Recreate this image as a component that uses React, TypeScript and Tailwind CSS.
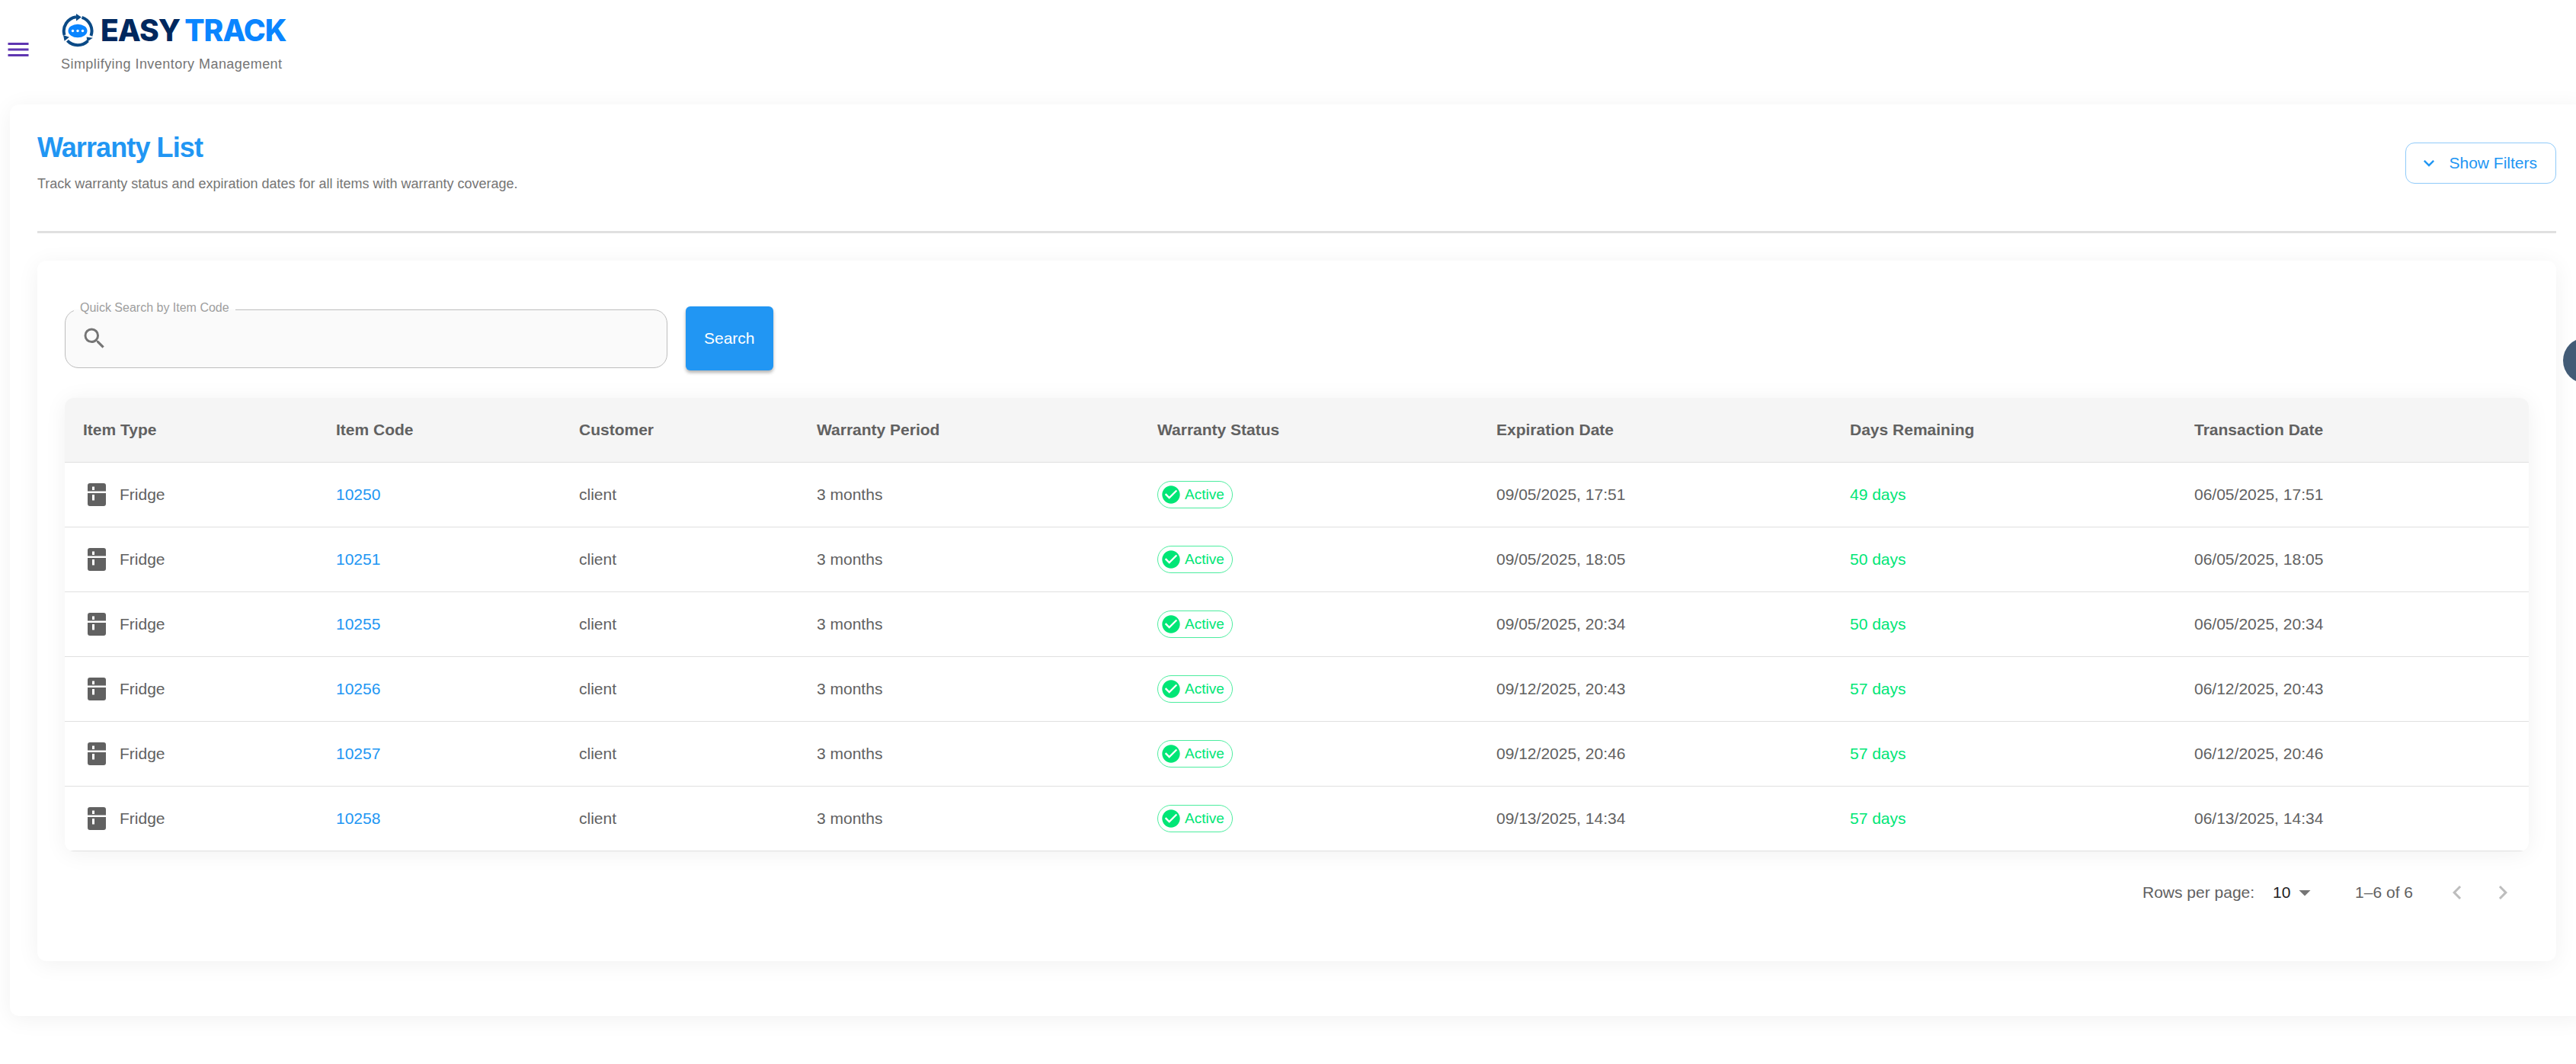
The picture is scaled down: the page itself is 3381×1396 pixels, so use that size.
import { useState } from "react";
import { MdArrowDropDown, MdCheckCircle, MdChevronLeft, MdChevronRight, MdExpandMore, MdMenu, MdSearch } from "react-icons/md";

type Warranty = {
  type: string;
  code: string;
  customer: string;
  period: string;
  status: string;
  expires: string;
  remaining: string;
  created: string;
};

const warranties: Warranty[] = [
  { type: "Fridge", code: "10250", customer: "client", period: "3 months", status: "Active", expires: "09/05/2025, 17:51", remaining: "49 days", created: "06/05/2025, 17:51" },
  { type: "Fridge", code: "10251", customer: "client", period: "3 months", status: "Active", expires: "09/05/2025, 18:05", remaining: "50 days", created: "06/05/2025, 18:05" },
  { type: "Fridge", code: "10255", customer: "client", period: "3 months", status: "Active", expires: "09/05/2025, 20:34", remaining: "50 days", created: "06/05/2025, 20:34" },
  { type: "Fridge", code: "10256", customer: "client", period: "3 months", status: "Active", expires: "09/12/2025, 20:43", remaining: "57 days", created: "06/12/2025, 20:43" },
  { type: "Fridge", code: "10257", customer: "client", period: "3 months", status: "Active", expires: "09/12/2025, 20:46", remaining: "57 days", created: "06/12/2025, 20:46" },
  { type: "Fridge", code: "10258", customer: "client", period: "3 months", status: "Active", expires: "09/13/2025, 14:34", remaining: "57 days", created: "06/13/2025, 14:34" }
];

const columns = [
  { label: "Item Type", width: "w-[332px]" },
  { label: "Item Code", width: "w-[319px]" },
  { label: "Customer", width: "w-[312px]" },
  { label: "Warranty Period", width: "w-[447px]" },
  { label: "Warranty Status", width: "w-[445px]" },
  { label: "Expiration Date", width: "w-[464px]" },
  { label: "Days Remaining", width: "w-[452px]" },
  { label: "Transaction Date", width: "w-[463px]" }
];

function LogoMark() {
  return (
    <svg viewBox="0 0 44 44" className="size-11" aria-hidden>
      <g fill="none" stroke="#0B4A86" strokeWidth="4">
        <path d="M4.5 28A18.8 18.8 0 0 1 20 4.2" />
        <path d="M27.5 4.8A18.8 18.8 0 0 1 39.4 29" />
        <path d="M35.4 35.6A18.8 18.8 0 0 1 8.4 35.4" />
      </g>
      <g fill="#0B4A86">
        <path d="M20 0l6.8 4.6-6.8 4.8z" />
        <path d="M33.6 30.4l8.2 1.4-7.4 5z" />
        <path d="M3 28l7.9 2.8-6.3 5z" />
      </g>
      <ellipse cx="22" cy="22.5" rx="12.5" ry="8.8" fill="#0A85FF" />
      <g fill="#fff">
        <circle cx="15.5" cy="22.5" r="1.7" />
        <circle cx="22" cy="22.5" r="1.7" />
        <circle cx="28.5" cy="22.5" r="1.7" />
      </g>
    </svg>
  );
}

function FridgeIcon() {
  return (
    <svg viewBox="0 0 24 24" className="size-9" fill="currentColor" fillRule="evenodd" aria-hidden>
      <path d="M6 2h12a2 2 0 0 1 2 2v5H4V4a2 2 0 0 1 2-2zM8 5v3h2V5z" />
      <path d="M4 10.7h16V20a2 2 0 0 1-2 2H6a2 2 0 0 1-2-2zM8 12v5h2v-5z" />
    </svg>
  );
}

function Header() {
  return (
    <header className="flex items-center gap-[38px] px-1.5 pb-9 pt-4">
      <button type="button" aria-label="Open menu" className="mt-3 text-[#5E35B1]">
        <MdMenu size={36} />
      </button>
      <div>
        <div className="flex items-center gap-2">
          <LogoMark />
          <span className="flex gap-1.5 font-['Inter',sans-serif] text-[39px] font-extrabold leading-[48px] tracking-tight">
            <span className="text-[#00285E]">EASY</span>
            <span className="text-[#0A85FF]">TRACK</span>
          </span>
        </div>
        <p className="mt-1 text-[18px] leading-[33px] tracking-wide text-[#757575]">Simplifying Inventory Management</p>
      </div>
    </header>
  );
}

function SearchBar() {
  const [query, setQuery] = useState("");

  return (
    <form className="flex items-center gap-6" onSubmit={(e) => e.preventDefault()}>
      <div className="relative">
        <label
          htmlFor="quick-search"
          className="absolute -top-3 left-3 bg-linear-to-b from-white from-60% to-[#FAFAFA] to-60% px-2 text-[16px] leading-5 text-[#9E9E9E]"
        >
          Quick Search by Item Code
        </label>
        <div className="flex h-[77px] w-[791px] items-center gap-3 rounded-[18px] border border-[#BDBDBD] bg-[#FAFAFA] px-5">
          <MdSearch size={36} className="text-[#757575]" />
          <input
            id="quick-search"
            type="text"
            value={query}
            onChange={(e) => setQuery(e.target.value)}
            className="h-full flex-1 bg-transparent text-[21px] text-[#616161] outline-none"
          />
        </div>
      </div>
      <button
        type="submit"
        className="h-[84px] rounded-md bg-[#2196F3] px-6 text-[21px] font-medium text-white shadow-[0_3px_4px_rgba(0,0,0,0.3)]"
      >
        Search
      </button>
    </form>
  );
}

function WarrantyTable() {
  return (
    <div className="overflow-hidden rounded-xl bg-white shadow-[0_3px_30px_rgba(0,0,0,0.06)]">
      <table className="w-full table-fixed border-separate border-spacing-0 text-left text-[21px] leading-8 text-[#616161] [&_td]:border-b [&_td]:border-[#E0E0E0] [&_td]:px-6 [&_th]:border-b [&_th]:border-[#E0E0E0] [&_th]:px-6">
        <thead className="bg-[#F5F5F5]">
          <tr className="h-[85px]">
            {columns.map((column) => (
              <th key={column.label} scope="col" className={`font-bold ${column.width}`}>
                {column.label}
              </th>
            ))}
          </tr>
        </thead>
        <tbody>
          {warranties.map((item) => (
            <tr key={item.code} className="h-[85px]">
              <td>
                <span className="flex items-center gap-3">
                  <FridgeIcon />
                  {item.type}
                </span>
              </td>
              <td>
                <a href={`#${item.code}`} className="text-[#2196F3]">
                  {item.code}
                </a>
              </td>
              <td>{item.customer}</td>
              <td>{item.period}</td>
              <td>
                <span className="flex h-9 w-fit items-center gap-1 rounded-full border border-[#00E676]/70 pl-[3px] pr-2.5 text-[19px] text-[#00E676]">
                  <MdCheckCircle size={28} />
                  {item.status}
                </span>
              </td>
              <td>{item.expires}</td>
              <td className="text-[#00E676]">{item.remaining}</td>
              <td>{item.created}</td>
            </tr>
          ))}
        </tbody>
      </table>
    </div>
  );
}

function Pagination() {
  return (
    <div className="flex h-[108px] items-center justify-end pr-4 text-[21px] text-[#616161]">
      <label htmlFor="rows-per-page">Rows per page:</label>
      <div className="relative ml-3 mr-12 flex items-center">
        <select id="rows-per-page" defaultValue="10" className="h-12 appearance-none pl-3 pr-9 text-[#212121] outline-none">
          <option>10</option>
          <option>25</option>
          <option>50</option>
        </select>
        <MdArrowDropDown size={36} className="pointer-events-none absolute right-0 text-[#757575]" />
      </div>
      <span>1–6 of 6</span>
      <div className="ml-10 flex gap-6 text-[#BDBDBD]">
        <button type="button" aria-label="Previous page" disabled>
          <MdChevronLeft size={36} />
        </button>
        <button type="button" aria-label="Next page" disabled>
          <MdChevronRight size={36} />
        </button>
      </div>
    </div>
  );
}

export default function App() {
  return (
    <div className="relative min-h-screen overflow-hidden bg-white pb-[62px] font-['Liberation_Sans',Arial,sans-serif]">
      <Header />

      <main className="-mr-3 ml-[13px] rounded-xl bg-white pb-[72px] pl-9 pr-[38px] pt-9 shadow-[0_4px_30px_rgba(0,0,0,0.06)]">
        <div className="flex items-center justify-between border-b-[3px] border-[#E0E0E0] pb-12">
          <div>
            <h1 className="text-[36px] font-bold leading-[42px] tracking-tight text-[#2196F3]">Warranty List</h1>
            <p className="mt-3 text-[18px] leading-7 text-[#757575]">
              Track warranty status and expiration dates for all items with warranty coverage.
            </p>
          </div>
          <button
            type="button"
            className="flex h-[54px] items-center gap-3 rounded-xl border border-[#2196F3]/50 pl-4 pr-6 text-[21px] font-medium text-[#2196F3]"
          >
            <MdExpandMore size={28} />
            Show Filters
          </button>
        </div>

        <section className="mt-9 rounded-xl bg-white px-9 pb-9 pt-[60px] shadow-[0_4px_30px_rgba(0,0,0,0.06)]">
          <SearchBar />
          <div className="mt-9">
            <WarrantyTable />
          </div>
          <Pagination />
        </section>
      </main>

      <button
        type="button"
        aria-label="Open settings"
        className="absolute -right-[43px] top-[443px] size-[60px] rounded-full bg-[#425B76]"
      />
    </div>
  );
}
